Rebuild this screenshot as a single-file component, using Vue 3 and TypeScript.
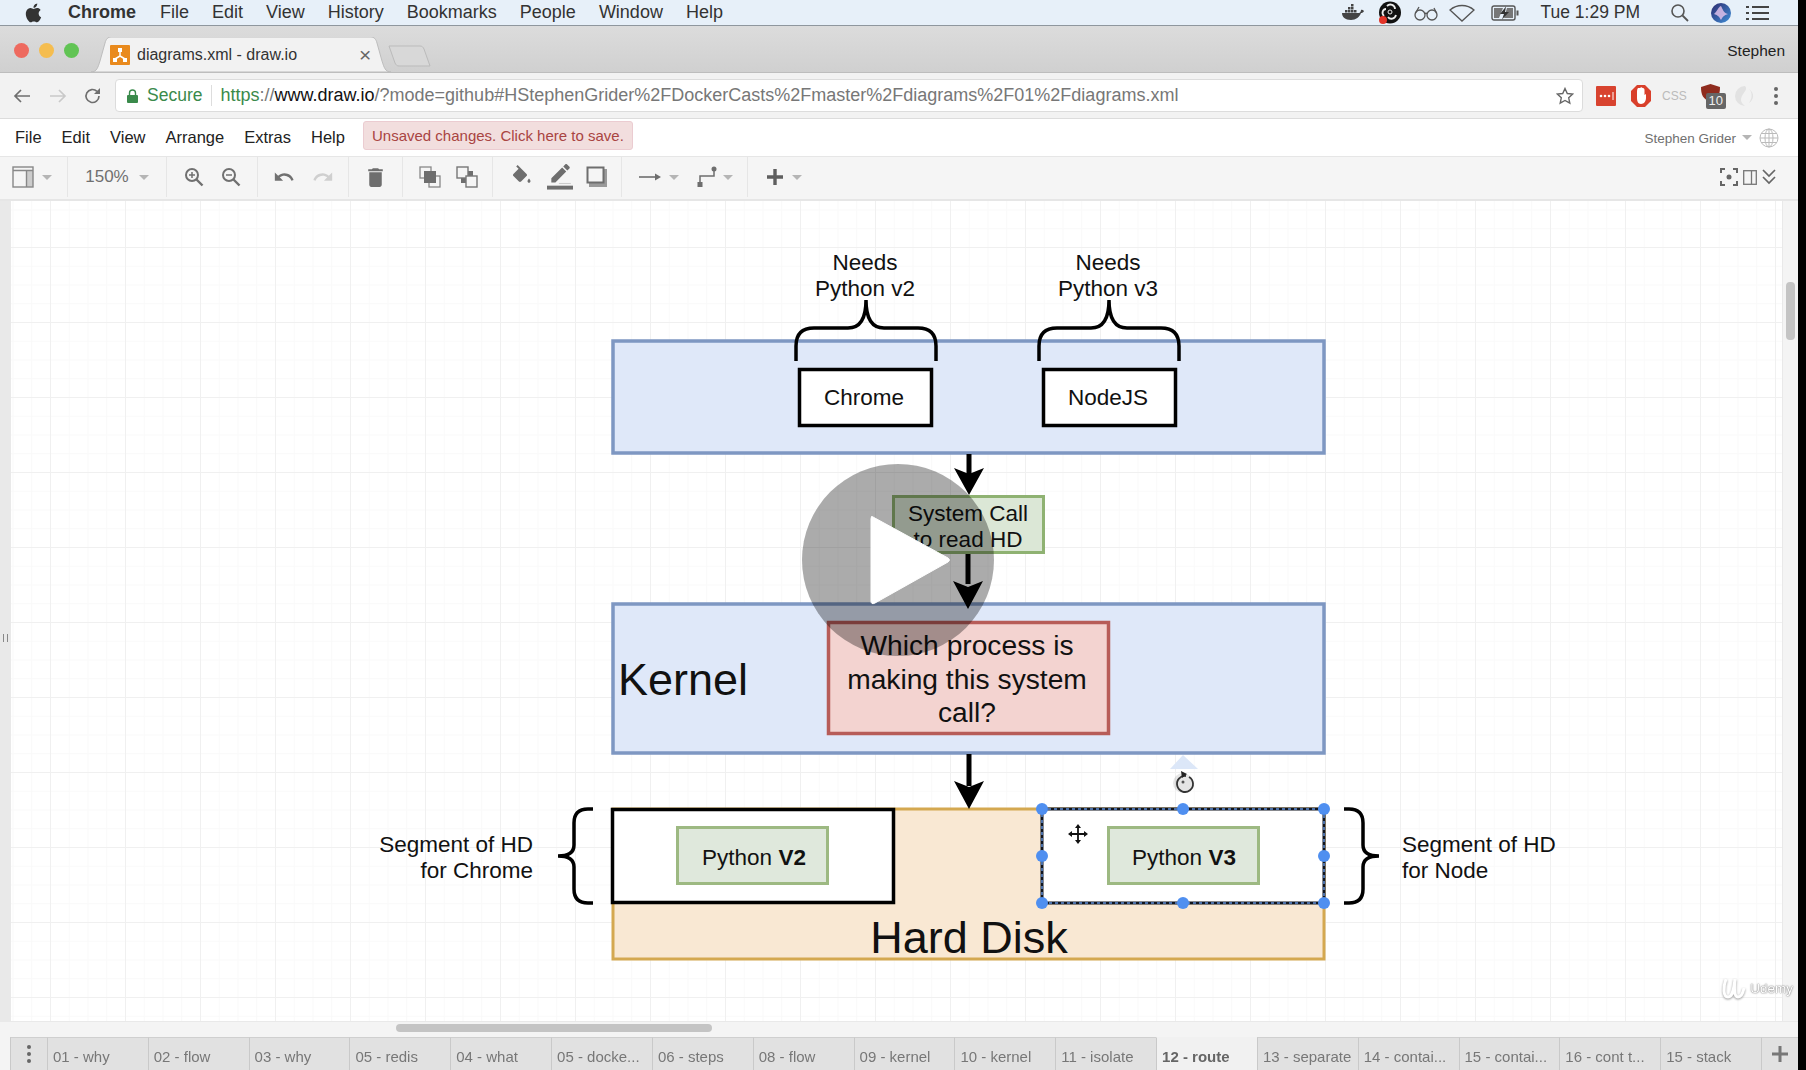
<script setup lang="ts">
const menuItems = ['File', 'Edit', 'View', 'History', 'Bookmarks', 'People', 'Window', 'Help']
const appMenu = ['File', 'Edit', 'View', 'Arrange', 'Extras', 'Help']
const sheets = [
  '01 - why', '02 - flow', '03 - why', '05 - redis', '04 - what', '05 - docke...',
  '06 - steps', '08 - flow', '09 - kernel', '10 - kernel', '11 - isolate', '12 - route',
  '13 - separate', '14 - contai...', '15 - contai...', '16 - cont t...', '15 - stack',
]
const activeSheet = '12 - route'

// selection handles round the V3 segment
const handles = [
  [1042, 809], [1183, 809], [1324, 809], [1042, 856],
  [1324, 856], [1042, 903], [1183, 903], [1324, 903],
]
</script>

<template>
  <div class="screen">
    <div class="desktop">
      <header class="menubar">
        <svg class="apple" viewBox="0 0 24 24"><path d="M17.05 12.54c-.03-2.6 2.12-3.85 2.22-3.91-1.21-1.77-3.09-2.01-3.76-2.04-1.6-.16-3.12.94-3.93.94-.81 0-2.06-.92-3.39-.9-1.74.03-3.35 1.01-4.25 2.57-1.81 3.14-.46 7.8 1.3 10.35.86 1.25 1.89 2.65 3.24 2.6 1.3-.05 1.79-.84 3.36-.84 1.57 0 2.01.84 3.38.81 1.4-.02 2.28-1.27 3.14-2.53.99-1.45 1.4-2.85 1.42-2.93-.03-.01-2.72-1.04-2.75-4.12zM14.47 4.9c.72-.87 1.2-2.08 1.07-3.28-1.03.04-2.28.69-3.02 1.55-.66.77-1.24 2-1.09 3.18 1.15.09 2.33-.58 3.04-1.45z" /></svg>
        <b class="app-name">Chrome</b>
        <nav class="mac-menu">
          <span v-for="item in menuItems" :key="item">{{ item }}</span>
        </nav>
        <div class="tray">
          <svg class="t-docker" width="22" height="18" viewBox="0 0 22 18">
            <path d="M0 9h17c1 0 2-2 2-3 1-.5 2 0 3 1-.6 1.500-1.800 2-3 2-1.500 4-5 7-10 7-6 0-9-3-9-7z" fill="#444" />
            <path d="M3 6h2.500v2.500H3zM6 6h2.500v2.500H6zM9 6h2.500v2.500H9zM12 6h2.500v2.500H12zM6 3h2.500v2.500H6zM9 3h2.500v2.500H9zM9 0h2.500v2.500H9z" fill="#444" />
          </svg>
          <svg class="t-obs" width="24" height="24" viewBox="0 0 24 24">
            <circle cx="12" cy="11.500" r="11" fill="#111" />
            <path d="M9 5c3-3 8-1 8 3M18 14c-1 4-6 5-8 2M6 15c-3-3-1-7 2-7" fill="none" stroke="#eee" stroke-width="1.800" />
            <circle cx="12" cy="11" r="2" fill="#111" stroke="#eee" stroke-width="1" />
            <circle cx="5" cy="19" r="4" fill="#e23428" />
          </svg>
          <svg class="t-glasses" width="24" height="16" viewBox="0 0 24 16">
            <circle cx="6" cy="10" r="5" fill="none" stroke="#555" stroke-width="1.300" />
            <circle cx="18" cy="10" r="5" fill="none" stroke="#555" stroke-width="1.300" />
            <path d="M11 9c.5-1 1.500-1 2 0M1.500 8 5 2M22.500 8 20 3" fill="none" stroke="#555" stroke-width="1.300" />
          </svg>
          <svg class="t-wifi" width="26" height="18" viewBox="0 0 26 18">
            <path d="M1 6C8 0 18 0 25 6L13 17z" fill="none" stroke="#555" stroke-width="1.300" />
          </svg>
          <svg class="t-battery" width="28" height="16" viewBox="0 0 28 16">
            <rect x="1" y="1" width="23" height="14" rx="2" fill="none" stroke="#555" stroke-width="1.400" />
            <path d="M3 3h9L8 13H3zM16 3h6v10H13z" fill="#777" />
            <path d="M15 1.500 9 9h4l-2 5.500 7-7.500h-4z" fill="#333" />
            <rect x="25.500" y="5.500" width="2" height="5" fill="#555" />
          </svg>
          <span class="clock">Tue 1:29 PM</span>
          <svg class="t-search" width="20" height="20" viewBox="0 0 20 20">
            <circle cx="8" cy="8" r="6" fill="none" stroke="#555" stroke-width="1.600" />
            <path d="M12.500 12.500 18 18" stroke="#555" stroke-width="1.800" />
          </svg>
          <svg class="t-siri" width="20" height="20" viewBox="0 0 20 20">
            <defs>
              <linearGradient id="siriFill" x1="0" y1="0" x2="1" y2="1">
                <stop offset="0" stop-color="#2d2a6e" />
                <stop offset="1" stop-color="#3f8fd8" />
              </linearGradient>
            </defs>
            <circle cx="10" cy="10" r="10" fill="url(#siriFill)" />
            <path d="M3 11C6 9 7 4 10 3c2 3 2 7 7 8-3 1-5 2-7 6-2-4-4-5-7-6z" fill="#e9c5ee" opacity=".8" />
          </svg>
          <svg class="t-list" width="23" height="14" viewBox="0 0 23 14">
            <path d="M0 1h3M0 7h3M0 13h3M6 1h17M6 7h17M6 13h17" stroke="#444" stroke-width="2" />
          </svg>
        </div>
      </header>

      <div class="tabstrip">
        <div class="lights">
          <i class="light red"></i><i class="light amber"></i><i class="light green"></i>
        </div>
        <div class="tab">
          <svg class="tab-shape" width="300" height="35" viewBox="0 0 300 35">
            <path d="M0 35C6 35 7 30 9 24L14 6C15 2 17 0 20 0H280C283 0 285 2 286 6L291 24C293 30 294 35 300 35z" fill="#f2f2f2" stroke="#bdbdbd" />
          </svg>
          <svg class="favicon" width="20" height="20" viewBox="0 0 20 20">
            <rect width="20" height="20" rx="1" fill="#e98a1d" />
            <path d="M10 7v4M10 11 5 14M10 11l5 3" stroke="#fff" stroke-width="1.500" />
            <rect x="8" y="3" width="4" height="4" fill="#fff" />
            <rect x="3" y="13" width="4" height="4" fill="#fff" />
            <rect x="13" y="13" width="4" height="4" fill="#fff" />
          </svg>
          <span class="tab-title">diagrams.xml - draw.io</span>
          <span class="tab-close">×</span>
        </div>
        <svg class="new-tab" width="44" height="22" viewBox="0 0 44 22">
          <path d="M1 1H32C34 1 35 2 36 4L42 21H11C9 21 8 20 7 18z" fill="#d8d8d8" stroke="#bbb" />
        </svg>
        <span class="profile">Stephen</span>
      </div>

      <div class="addressbar">
        <svg class="nav-back" width="18" height="16" viewBox="0 0 18 16"><path d="M17 8H2M8 2 2 8l6 6" fill="none" stroke="#6f6f6f" stroke-width="1.700" /></svg>
        <svg class="nav-forward" width="18" height="16" viewBox="0 0 18 16"><path d="M1 8h15M10 2l6 6-6 6" fill="none" stroke="#c9c9c9" stroke-width="1.700" /></svg>
        <svg class="nav-reload" width="18" height="18" viewBox="0 0 18 18">
          <path d="M15 9a6.500 6.500 0 1 1-2-4.700" fill="none" stroke="#6f6f6f" stroke-width="1.700" />
          <path d="M16 1v6h-6z" fill="#6f6f6f" />
        </svg>
        <div class="omnibox">
          <svg width="11" height="14" viewBox="0 0 11 14">
            <rect y="6" width="11" height="8" rx="1" fill="#3a8a4b" />
            <path d="M2.500 6V4a3 3 0 0 1 6 0v2" fill="none" stroke="#3a8a4b" stroke-width="1.400" />
          </svg>
          <span class="secure">Secure</span>
          <span class="url"><span class="url-scheme">https</span>://<span class="url-host">www.draw.io</span>/?mode=github#HStephenGrider%2FDockerCasts%2Fmaster%2Fdiagrams%2F01%2Fdiagrams.xml</span>
          <svg class="star" width="18" height="18" viewBox="0 0 18 18"><path d="m9 1.500 2.300 5 5.400.6-4 3.700 1.100 5.400L9 13.500l-4.800 2.700 1.100-5.400-4-3.700 5.400-.6z" fill="none" stroke="#666" stroke-width="1.400" /></svg>
        </div>
        <div class="extensions">
          <svg class="x-lastpass" width="20" height="20" viewBox="0 0 20 20">
            <rect width="20" height="20" rx="1" fill="#d8432f" />
            <circle cx="5" cy="10" r="1.300" fill="#fff" /><circle cx="9" cy="10" r="1.300" fill="#fff" /><circle cx="13" cy="10" r="1.300" fill="#fff" />
            <path d="M17 6v8" stroke="#fff" />
          </svg>
          <svg class="x-adblock" width="20" height="22" viewBox="0 0 20 22">
            <path d="M6 0h8l6 6v10l-6 6H6l-6-6V6z" fill="#d9402b" />
            <path d="M6 8c0-5 1-5 1.500-5S9 3 9 3c1-1 2-1 2.500 0 1 0 2 .5 2 2v5l1.500-1v4c0 3-2 6-5 6s-4-3-4-6z" fill="#fff" />
          </svg>
          <span class="x-css">CSS</span>
          <div class="x-ublock">
            <svg width="19" height="18" viewBox="0 0 19 18"><path d="M9.500 0 19 3c0 8-2 12-9.500 15C2 15 0 11 0 3z" fill="#8f2c1e" /></svg>
            <span class="badge">10</span>
          </div>
          <svg class="x-faint" width="20" height="22" viewBox="0 0 20 22">
            <path d="M10 1a10 10 0 1 0 0 20c-4-3-5-6-3-10s6-7 3-10zM14 4c3 3 4 8 0 14 5-3 6-10 0-14z" fill="#e2e2e2" />
          </svg>
          <svg class="x-dots" width="6" height="20" viewBox="0 0 6 20">
            <circle cx="3" cy="3" r="2" fill="#666" /><circle cx="3" cy="10" r="2" fill="#666" /><circle cx="3" cy="17" r="2" fill="#666" />
          </svg>
        </div>
      </div>

      <div class="app-menu">
        <span v-for="item in appMenu" :key="item" class="app-menu-item">{{ item }}</span>
        <span class="unsaved">Unsaved changes. Click here to save.</span>
        <span class="account">Stephen Grider</span>
        <i class="caret"></i>
        <svg class="globe" width="20" height="20" viewBox="0 0 20 20">
          <circle cx="10" cy="10" r="9" fill="none" stroke="#bbb" />
          <ellipse cx="10" cy="10" rx="4" ry="9" fill="none" stroke="#bbb" />
          <path d="M1 10h18M2 5.500h16M2 14.500h16M10 1v18" stroke="#bbb" />
        </svg>
      </div>

      <div class="toolbar">
        <div class="tool-group g-format">
          <svg width="22" height="22" viewBox="0 0 22 22">
            <rect x="15" y="4" width="6" height="17" fill="#ccc" />
            <rect x="1" y="1" width="20" height="20" fill="none" stroke="#888" stroke-width="1.400" />
            <path d="M1 4.500h20M14.500 4.500V21" stroke="#888" stroke-width="1.400" />
          </svg>
          <i class="caret"></i>
        </div>
        <div class="tool-group g-zoom">
          <span class="zoom-value">150%</span>
          <i class="caret"></i>
        </div>
        <div class="tool-group g-pair">
          <svg width="20" height="20" viewBox="0 0 20 20">
            <circle cx="8" cy="8" r="6" fill="none" stroke="#707070" stroke-width="2" />
            <path d="M12.500 12.500 18.500 18.500" stroke="#707070" stroke-width="2.400" />
            <path d="M5 8h6M8 5v6" stroke="#707070" stroke-width="1.500" />
          </svg>
          <svg width="20" height="20" viewBox="0 0 20 20">
            <circle cx="8" cy="8" r="6" fill="none" stroke="#707070" stroke-width="2" />
            <path d="M12.500 12.500 18.500 18.500" stroke="#707070" stroke-width="2.400" />
            <path d="M5 8h6" stroke="#707070" stroke-width="1.500" />
          </svg>
        </div>
        <div class="tool-group g-pair">
          <svg width="22" height="22" viewBox="0 0 24 24"><path d="M12.500 8c-2.650 0-5.050.99-6.900 2.600L2 7v9h9l-3.620-3.620c1.390-1.160 3.160-1.880 5.120-1.880 3.540 0 6.550 2.310 7.600 5.500l2.370-.78C21.080 11.030 17.150 8 12.500 8z" fill="#707070" /></svg>
          <svg class="flip" width="22" height="22" viewBox="0 0 24 24"><path d="M12.500 8c-2.650 0-5.050.99-6.900 2.600L2 7v9h9l-3.620-3.620c1.390-1.160 3.160-1.880 5.120-1.880 3.540 0 6.550 2.310 7.600 5.500l2.370-.78C21.080 11.030 17.150 8 12.500 8z" fill="#cfcfcf" /></svg>
        </div>
        <div class="tool-group g-trash">
          <svg width="25" height="25" viewBox="0 0 24 24"><path d="M6 19c0 1.100.9 2 2 2h8c1.100 0 2-.9 2-2V7H6v12zM19 4h-3.500l-1-1h-5l-1 1H5v2h14V4z" fill="#6e6e6e" /></svg>
        </div>
        <div class="tool-group g-order">
          <svg width="22" height="22" viewBox="0 0 22 22">
            <rect x="1" y="1" width="11" height="11" fill="none" stroke="#888" stroke-width="1.300" />
            <rect x="10" y="10" width="11" height="11" fill="none" stroke="#888" stroke-width="1.300" />
            <rect x="5" y="5" width="12" height="12" fill="#6e6e6e" />
          </svg>
          <svg width="22" height="22" viewBox="0 0 22 22">
            <rect x="5" y="5" width="12" height="12" fill="#6e6e6e" />
            <rect x="1" y="1" width="11" height="11" fill="#f5f5f5" stroke="#777" stroke-width="1.400" />
            <rect x="10" y="10" width="11" height="11" fill="#f5f5f5" stroke="#777" stroke-width="1.400" />
          </svg>
        </div>
        <div class="tool-group g-style">
          <svg width="24" height="24" viewBox="0 0 24 24">
            <path d="M16.560 8.940 7.620 0 6.210 1.410l2.380 2.380-5.150 5.150c-.59.59-.59 1.540 0 2.120l5.500 5.500c.29.29.68.44 1.060.44s.77-.15 1.060-.44l5.500-5.500c.59-.58.59-1.530 0-2.120zM19 13.500s-1.500 1.670-1.500 2.700c0 .85.670 1.500 1.500 1.500s1.500-.65 1.500-1.500c0-1.030-1.500-2.700-1.500-2.700z" fill="#6e6e6e" />
          </svg>
          <svg width="26" height="26" viewBox="0 0 24 24">
            <path d="M17.750 7 14 3.250l-10 10V17h3.750l10-10zm2.960-2.960c.39-.39.39-1.020 0-1.410L18.370.29c-.39-.39-1.020-.39-1.410 0L15 2.250 18.750 6l1.960-1.960z" fill="#6e6e6e" />
            <rect y="20" width="24" height="3.600" fill="#6e6e6e" />
            <rect x="11" y="17.500" width="11" height="1" fill="#ccc" />
          </svg>
          <svg width="22" height="22" viewBox="0 0 22 22">
            <rect x="3" y="3" width="18" height="18" fill="#9a9a9a" />
            <rect x="1.500" y="1.500" width="16" height="15" fill="#f5f5f5" stroke="#6e6e6e" stroke-width="2" />
          </svg>
        </div>
        <div class="tool-group g-lines">
          <svg width="22" height="12" viewBox="0 0 22 12"><path d="M0 6h17" stroke="#6e6e6e" stroke-width="1.600" /><path d="M22 6l-6-3.500v7z" fill="#6e6e6e" /></svg>
          <i class="caret"></i>
          <svg class="wp" width="22" height="22" viewBox="0 0 22 22">
            <path d="M19 3v7H5v8" fill="none" stroke="#6e6e6e" stroke-width="1.500" />
            <circle cx="19" cy="3" r="2.500" fill="#6e6e6e" />
            <rect x="2.500" y="16" width="5" height="5" fill="#6e6e6e" />
          </svg>
          <i class="caret"></i>
        </div>
        <div class="tool-group g-insert">
          <svg width="18" height="18" viewBox="0 0 18 18"><path d="M9 1v16M1 9h16" stroke="#5f5f5f" stroke-width="3.400" /></svg>
          <i class="caret"></i>
        </div>
        <div class="view-tools">
          <svg width="18" height="18" viewBox="0 0 18 18">
            <path d="M1 5V1h4M13 1h4v4M17 13v4h-4M5 17H1v-4" fill="none" stroke="#666" stroke-width="2" />
            <circle cx="9" cy="9" r="2.500" fill="#666" />
          </svg>
          <svg width="14" height="15" viewBox="0 0 14 15">
            <rect x=".7" y=".7" width="12.600" height="13.600" fill="none" stroke="#777" stroke-width="1.300" />
            <path d="M8.500 1v13" stroke="#777" stroke-width="1.300" />
          </svg>
          <svg width="14" height="16" viewBox="0 0 14 16"><path d="M1 1l6 6 6-6M1 8l6 6 6-6" fill="none" stroke="#666" stroke-width="1.700" /></svg>
        </div>
      </div>

      <div class="workspace">
        <aside class="gutter"><i class="grip"></i></aside>
        <main class="canvas">
          <svg class="diagram" width="1771" height="820" viewBox="11 201 1771 820" font-family="'Liberation Sans', Arial, sans-serif" fill="#111">
            <!-- hard disk sits under its segments -->
            <rect x="613" y="809" width="711" height="150" fill="#f9e8d3" stroke="#d4a850" stroke-width="3" />
            <text x="969" y="953" font-size="45" text-anchor="middle">Hard Disk</text>

            <!-- user space -->
            <rect x="613" y="341" width="711" height="112" fill="#dfe8f9" stroke="#7e97c2" stroke-width="3.500" />
            <rect x="799.500" y="369.500" width="132" height="56" fill="#fff" stroke="#000" stroke-width="3.500" />
            <text x="864" y="405" font-size="22.500" text-anchor="middle">Chrome</text>
            <rect x="1043.500" y="369.500" width="132" height="56" fill="#fff" stroke="#000" stroke-width="3.500" />
            <text x="1108" y="405" font-size="22.500" text-anchor="middle">NodeJS</text>
            <text x="865" y="270" font-size="22.500" text-anchor="middle">Needs</text>
            <text x="865" y="296" font-size="22.500" text-anchor="middle">Python v2</text>
            <text x="1108" y="270" font-size="22.500" text-anchor="middle">Needs</text>
            <text x="1108" y="296" font-size="22.500" text-anchor="middle">Python v3</text>
            <path d="M796 361V346Q796 328 814 328H848Q866 328 866 300Q866 328 884 328H918Q936 328 936 346V361" fill="none" stroke="#000" stroke-width="3.500" />
            <path d="M1039 361V346Q1039 328 1057 328H1091Q1109 328 1109 300Q1109 328 1127 328H1161Q1179 328 1179 346V361" fill="none" stroke="#000" stroke-width="3.500" />

            <!-- kernel -->
            <rect x="613" y="604" width="711" height="149" fill="#dfe8f9" stroke="#7e97c2" stroke-width="3.500" />
            <text x="618" y="695" font-size="45">Kernel</text>
            <rect x="828.500" y="622.500" width="280" height="111" fill="#f3d3d0" stroke="#b75c58" stroke-width="3.500" />
            <text x="967" y="655" font-size="28.200" text-anchor="middle">Which process is</text>
            <text x="967" y="689" font-size="28.200" text-anchor="middle">making this system</text>
            <text x="967" y="722" font-size="28.200" text-anchor="middle">call?</text>

            <!-- arrows -->
            <path d="M969 454V476" stroke="#000" stroke-width="5" />
            <path d="M969 495 954 468 969 474 984 468z" fill="#000" />
            <path d="M968 552V584" stroke="#000" stroke-width="5" />
            <path d="M968 609 953 581 968 587 983 581z" fill="#000" />
            <path d="M969 754V786" stroke="#000" stroke-width="5" />
            <path d="M969 809 954 781 969 787 984 781z" fill="#000" />

            <!-- system call -->
            <rect x="893.500" y="496.500" width="150" height="56" fill="#dbe7d6" stroke="#8fb272" stroke-width="3" />
            <text x="968" y="521" font-size="22.500" text-anchor="middle">System Call</text>
            <text x="968" y="547" font-size="22.500" text-anchor="middle">to read HD</text>

            <!-- disk segments -->
            <rect x="612.500" y="809.500" width="281" height="93" fill="#fff" stroke="#000" stroke-width="3.500" />
            <rect x="677.500" y="827.500" width="150" height="56" fill="#dfe8dc" stroke="#9db982" stroke-width="3" />
            <text x="754" y="865" font-size="22.500" text-anchor="middle">Python <tspan font-weight="700">V2</tspan></text>
            <rect x="1042" y="809" width="282" height="94" fill="#fff" stroke="#10151f" stroke-width="3" />
            <rect x="1042" y="809" width="282" height="94" fill="none" stroke="#5f8fd8" stroke-width="1.500" stroke-dasharray="3 3" />
            <rect x="1108.500" y="827.500" width="150" height="56" fill="#dfe8dc" stroke="#9db982" stroke-width="3" />
            <text x="1184" y="865" font-size="22.500" text-anchor="middle">Python <tspan font-weight="700">V3</tspan></text>

            <!-- side braces and notes -->
            <path d="M593 809H588Q574 809 574 823V845Q574 856 558 856Q574 856 574 867V889Q574 903 588 903H593" fill="none" stroke="#000" stroke-width="3.500" />
            <path d="M1344 809H1349Q1363 809 1363 823V845Q1363 856 1379 856Q1363 856 1363 867V889Q1363 903 1349 903H1344" fill="none" stroke="#000" stroke-width="3.500" />
            <text x="533" y="852" font-size="22.500" text-anchor="end">Segment of HD</text>
            <text x="533" y="878" font-size="22.500" text-anchor="end">for Chrome</text>
            <text x="1402" y="852" font-size="22.500">Segment of HD</text>
            <text x="1402" y="878" font-size="22.500">for Node</text>

            <!-- selection chrome -->
            <circle v-for="h in handles" :key="h.join()" :cx="h[0]" :cy="h[1]" r="6" fill="#4f8ff0" />
            <path d="M1183 755 1198 769H1170z" fill="#dce7f8" />
            <circle cx="1183" cy="783" r="10" fill="#000" opacity=".1" />
            <path d="M1189 777a8 8 0 1 1-3-1" fill="none" stroke="#333" stroke-width="1.800" />
            <path d="M1181 771l6 3-5 4z" fill="#222" />
            <circle cx="1183" cy="782" r="1.500" fill="#555" />
            <path d="M1078 824v20M1068 834h20" stroke="#fff" stroke-width="4" />
            <path d="M1078 826v16M1070 834h16" stroke="#111" stroke-width="1.800" />
            <path d="M1078 824l-3 4h6zM1078 844l-3-4h6zM1068 834l4-3v6zM1088 834l-4-3v6z" fill="#111" />

            <!-- video overlay -->
            <circle cx="898" cy="560" r="96" fill="#000" opacity=".33" />
            <path d="M873 517Q871 515 871 519V601Q871 605 875 603L948 562Q951 560 948 558z" fill="#fff" stroke="#fff" stroke-width="1" />
          </svg>
        </main>
        <aside class="vscroll"><i class="vthumb"></i></aside>
        <div class="watermark">
          <svg width="26" height="24" viewBox="0 0 26 24">
            <path d="M5 3C2 11 2 21 7 21c5 0 6-9 7-18-1 9-1 18 3 18 3 0 5-4 6-9" fill="none" stroke="#fff" stroke-width="3" />
          </svg>
          <span>Udemy</span>
        </div>
      </div>

      <div class="hscroll"><i class="hthumb"></i></div>

      <footer class="sheets">
        <div class="sheet sheet-menu">
          <svg width="6" height="20" viewBox="0 0 6 20">
            <circle cx="3" cy="3" r="2" fill="#666" /><circle cx="3" cy="10" r="2" fill="#666" /><circle cx="3" cy="17" r="2" fill="#666" />
          </svg>
        </div>
        <div v-for="name in sheets" :key="name + sheets.indexOf(name)" class="sheet" :class="{ active: name === activeSheet }">{{ name }}</div>
        <div class="sheet sheet-add">
          <svg width="16" height="16" viewBox="0 0 16 16"><path d="M8 0v16M0 8h16" stroke="#777" stroke-width="3" /></svg>
        </div>
      </footer>
    </div>
  </div>
</template>

<style scoped>
.screen {
  width: 1806px;
  height: 1070px;
  background: #000;
  overflow: hidden;
  font-family: 'Liberation Sans', Arial, sans-serif;
}

.desktop {
  width: 1798px;
  height: 1070px;
  display: flex;
  flex-direction: column;
  filter: blur(0.6px);
}

/* ===== mac menu bar ===== */
.menubar {
  flex: 0 0 26px;
  display: flex;
  align-items: center;
  background: #e7f0f9;
  border-bottom: 1px solid #8f979e;
  box-sizing: border-box;
  font-size: 18px;
  color: #333;
}
.apple {
  width: 22px;
  height: 22px;
  margin-left: 23px;
  fill: #333;
}
.app-name {
  margin-left: 23px;
}
.mac-menu {
  display: flex;
  gap: 23px;
  margin-left: 24px;
}
.tray {
  margin-left: auto;
  display: flex;
  align-items: center;
  padding-right: 29px;
}
.t-obs { margin-left: 14px; }
.t-glasses { margin-left: 12px; }
.t-wifi { margin-left: 11px; }
.t-battery { margin-left: 16px; }
.clock { margin-left: 21px; font-size: 17.5px; }
.t-search { margin-left: 30px; }
.t-siri { margin-left: 21px; }
.t-list { margin-left: 15px; }

/* ===== browser chrome ===== */
.tabstrip {
  flex: 0 0 47px;
  display: flex;
  align-items: flex-end;
  position: relative;
  background: linear-gradient(#dcdcdc, #d0d0d0);
  border-bottom: 1px solid #bdbdbd;
  box-sizing: border-box;
}
.lights {
  position: absolute;
  left: 14px;
  top: 17px;
  display: flex;
  gap: 10px;
}
.light {
  width: 15px;
  height: 15px;
  border-radius: 50%;
}
.light.red { background: #ee6a5f; }
.light.amber { background: #f5bd4f; }
.light.green { background: #61c454; }
.tab {
  position: relative;
  width: 300px;
  height: 35px;
  margin-left: 91px;
  display: flex;
  align-items: center;
  padding-left: 19px;
  box-sizing: border-box;
  font-size: 16px;
  color: #333;
}
.tab-shape {
  position: absolute;
  left: 0;
  top: 0;
}
.favicon,
.tab-title,
.tab-close {
  position: relative;
}
.tab-title { margin-left: 7px; }
.tab-close {
  margin-left: 62px;
  font-size: 21px;
  color: #666;
}
.new-tab {
  margin: 0 0 5px -3px;
}
.profile {
  margin: 0 13px 12px auto;
  font-size: 15.5px;
  color: #222;
}
.addressbar {
  flex: 0 0 46px;
  display: flex;
  align-items: center;
  background: #f2f2f2;
  border-bottom: 1px solid #dcdcdc;
  box-sizing: border-box;
}
.nav-back { margin-left: 13px; }
.nav-forward { margin-left: 18px; }
.nav-reload { margin-left: 17px; }
.omnibox {
  width: 1468px;
  height: 33px;
  margin-left: 13px;
  display: flex;
  align-items: center;
  padding: 0 8px 0 11px;
  box-sizing: border-box;
  background: #fff;
  border: 1px solid #dcdcdc;
  border-radius: 4px;
  font-size: 18px;
  color: #777;
}
.secure {
  margin-left: 9px;
  padding-right: 9px;
  border-right: 1px solid #ddd;
  font-size: 17.5px;
  color: #3a8a4b;
}
.url {
  margin-left: 8px;
  white-space: nowrap;
}
.url-scheme { color: #3a8a4b; }
.url-host { color: #111; }
.star { margin-left: auto; }
.extensions {
  display: flex;
  align-items: center;
  flex: 1;
}
.x-lastpass { margin-left: 13px; }
.x-adblock { margin-left: 15px; }
.x-css {
  margin-left: 11px;
  font-size: 12px;
  color: #bbb;
}
.x-ublock {
  position: relative;
  width: 24px;
  height: 24px;
  margin-left: 14px;
}
.badge {
  position: absolute;
  left: 5px;
  top: 9px;
  width: 20px;
  height: 16px;
  background: #666;
  border-radius: 2px;
  color: #eee;
  font-size: 13px;
  line-height: 16px;
  text-align: center;
}
.x-faint { margin-left: 10px; }
.x-dots { margin-left: 18px; }

/* ===== draw.io menu ===== */
.app-menu {
  flex: 0 0 38px;
  display: flex;
  align-items: center;
  padding-left: 15px;
  padding-right: 19px;
  box-sizing: border-box;
  background: #fff;
  border-bottom: 1px solid #e6e6e6;
  font-size: 16.5px;
  color: #222;
}
.app-menu-item {
  margin-right: 20px;
}
.unsaved {
  width: 270px;
  height: 29px;
  margin: -4px 0 0 -2px;
  box-sizing: border-box;
  background: #f2dede;
  border: 1px solid #ebccd1;
  border-radius: 3px;
  color: #a94442;
  font-size: 15px;
  line-height: 27px;
  text-align: center;
}
.account {
  margin: 2px 0 0 auto;
  font-size: 13.5px;
  color: #707070;
}
.caret {
  width: 0;
  height: 0;
  border-left: 5px solid transparent;
  border-right: 5px solid transparent;
  border-top: 5px solid #b5b5b5;
}
.app-menu .caret { margin-left: 6px; }
.globe { margin-left: 7px; }

.toolbar {
  flex: 0 0 44px;
  display: flex;
  padding-bottom: 2px;
  background: #f5f5f5;
  border-bottom: 2px solid #e6e6e6;
  box-sizing: border-box;
}
.tool-group {
  display: flex;
  align-items: center;
  justify-content: center;
  box-sizing: border-box;
  border-right: 1px solid #e6e6e6;
}
.g-format { width: 68px; gap: 8px; padding-right: 4px; }
.g-zoom { width: 99px; gap: 10px; color: #707070; font-size: 17px; }
.g-pair { width: 91px; gap: 17px; }
.g-trash { width: 54px; }
.g-order { width: 90px; gap: 15px; padding-left: 1px; }
.g-style { width: 129px; gap: 13px; padding-left: 4px; }
.g-lines { width: 126px; gap: 8px; padding-left: 3px; }
.g-lines .wp { margin-left: 8px; }
.g-lines .wp + .caret { margin-left: -2px; }
.g-insert { width: 84px; gap: 8px; border-right: 0; justify-content: flex-start; padding-left: 18px; }
.flip { transform: scaleX(-1); }
.view-tools {
  margin-left: auto;
  padding-right: 22px;
  display: flex;
  align-items: center;
  gap: 5px;
}

/* ===== canvas ===== */
.workspace {
  flex: 1;
  display: flex;
  position: relative;
  min-height: 0;
}
.gutter {
  width: 11px;
  position: relative;
  background: #e9e9e9;
}
.grip {
  position: absolute;
  left: 3px;
  top: 433px;
  width: 3px;
  height: 8px;
  border-left: 1px solid #888;
  border-right: 1px solid #888;
}
.canvas {
  width: 1771px;
  background-color: #fff;
  background-image:
    linear-gradient(#f0f0f0 1px, transparent 1px),
    linear-gradient(90deg, #f0f0f0 1px, transparent 1px),
    linear-gradient(#f9f9f9 1px, transparent 1px),
    linear-gradient(90deg, #f9f9f9 1px, transparent 1px);
  background-size: 75px 75px, 75px 75px, 18.75px 18.75px, 18.75px 18.75px;
  background-position: 0 46px, 39px 0, 0 46px, 39px 0;
}
.diagram {
  display: block;
}
.vscroll {
  flex: 1;
  position: relative;
  background: #f4f4f4;
  border-left: 1px solid #e9e9e9;
}
.vthumb {
  position: absolute;
  left: 3px;
  top: 81px;
  width: 9px;
  height: 58px;
  border-radius: 4px;
  background: #c4c4c4;
}
/* video platform mark over the canvas corner */
.watermark {
  position: absolute;
  right: 5px;
  top: 775px;
  display: flex;
  align-items: center;
  gap: 3px;
  color: #fff;
  font-size: 13.5px;
  text-shadow: 0 0 2px #777, 0 0 1px #777;
}
.watermark svg {
  filter: drop-shadow(0 1px 1px #999);
}
.hscroll {
  flex: 0 0 16px;
  position: relative;
  background: #f4f4f4;
  border-top: 1px solid #e9e9e9;
  box-sizing: border-box;
}
.hthumb {
  position: absolute;
  left: 396px;
  top: 2px;
  width: 316px;
  height: 8px;
  border-radius: 4px;
  background: #c4c4c4;
}
.sheets {
  flex: 0 0 33px;
  min-height: 0;
  display: flex;
  padding-left: 10px;
  background: #f4f4f4;
  overflow: hidden;
}
.sheet {
  width: 101px;
  height: 33px;
  box-sizing: border-box;
  padding-left: 5px;
  background: #e1e1e1;
  border-left: 1px solid #c9c9c9;
  border-top: 1px solid #cfcfcf;
  color: #777;
  font-size: 15px;
  line-height: 37px;
  white-space: nowrap;
  overflow: hidden;
}
.sheet.active {
  background: #f1f1f1;
  border-top-color: #f1f1f1;
  color: #666;
  font-weight: 700;
}
.sheet-menu {
  width: 37px;
  display: flex;
  align-items: center;
  justify-content: center;
  padding-left: 0;
}
.sheet-add {
  width: 37px;
  display: flex;
  align-items: center;
  justify-content: center;
  padding-left: 0;
}
</style>
